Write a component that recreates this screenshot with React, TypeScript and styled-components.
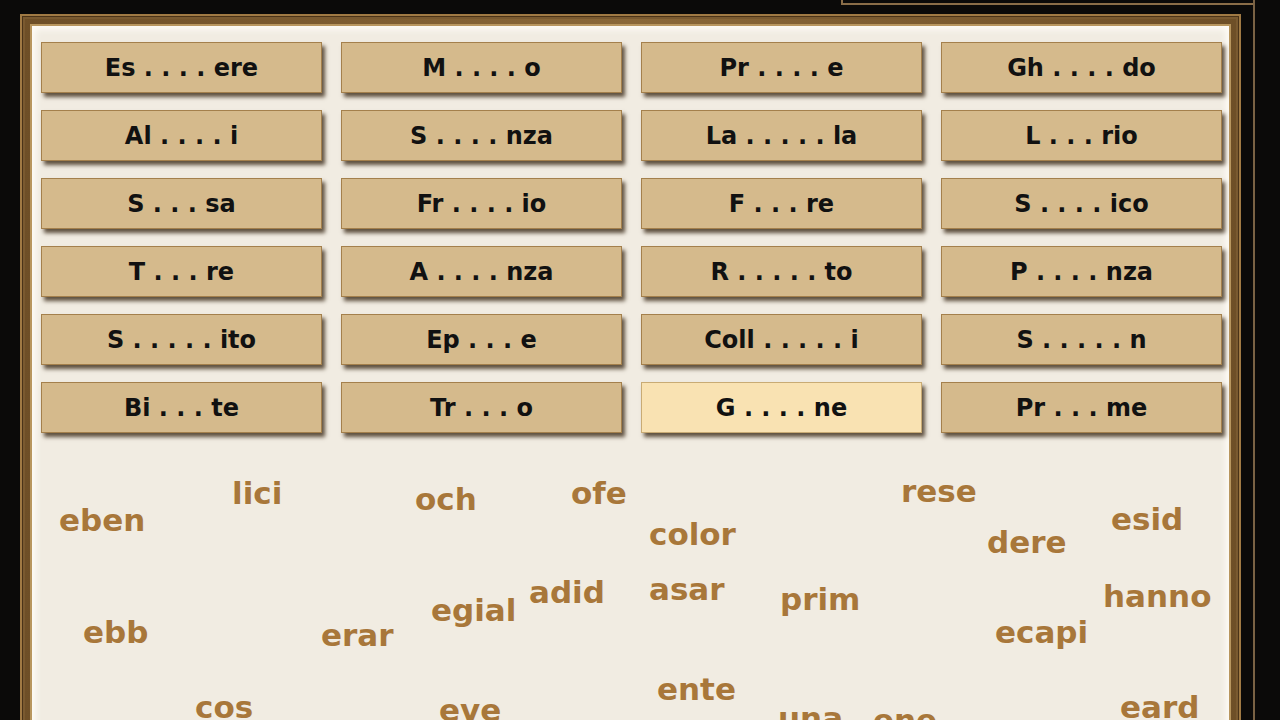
import React from "react";
import styled, { createGlobalStyle } from "styled-components";

const GlobalStyle = createGlobalStyle`
  html, body {
    margin: 0;
    padding: 0;
    background: #0b0a09;
    overflow: hidden;
  }
  #root {
    width: 1280px;
    height: 720px;
    overflow: hidden;
  }
`;

const Stage = styled.div`
  width: 1235px;
  height: 720px;
  margin-left: 20px;
  border-right: 2px solid #7a6244;
  box-sizing: border-box;
  display: flex;
  flex-direction: column;
`;

const TabRow = styled.div`
  height: 14px;
  display: flex;
  justify-content: flex-end;
  flex-shrink: 0;
`;

const Tab = styled.div`
  width: 410px;
  height: 3px;
  border-left: 2px solid #8a6d48;
  border-bottom: 2px solid #8a6d48;
`;

const Frame = styled.div`
  width: 1221px;
  flex: 1;
  box-sizing: border-box;
  border: 2px solid #a07a44;
  border-bottom: none;
  padding: 8px 8px 0 8px;
  background: linear-gradient(90deg, #6e4f27, #8a6838 50%, #6e4f27);
  box-shadow: inset 0 0 0 1px #4a3318, inset 0 0 0 3px #7a5a30;
  display: flex;
`;

const Panel = styled.div`
  flex: 1;
  border: 2px solid #b8965e;
  border-bottom: none;
  background: #f1ece2;
  box-shadow: inset 0 0 7px 3px #fffdf8;
  padding: 16px 7px 0 9px;
  display: flex;
  flex-direction: column;
`;

const Grid = styled.div`
  display: grid;
  grid-template-columns: repeat(4, 281px);
  grid-auto-rows: 51px;
  column-gap: 19px;
  row-gap: 17px;
`;

const Tile = styled.div<{ $active?: boolean }>`
  box-sizing: border-box;
  border: 1px solid ${(p) => (p.$active ? "#c9ab74" : "#a4804c")};
  background: ${(p) => (p.$active ? "#f9e2b2" : "#d5ba8c")};
  box-shadow: 3px 4px 4px rgba(45, 28, 8, 0.75);
  display: flex;
  align-items: center;
  justify-content: center;
  font-family: "DejaVu Sans", Verdana, sans-serif;
  font-weight: bold;
  font-size: 24px;
  color: #111;
  white-space: pre;
`;

const Pool = styled.div`
  position: relative;
  height: 400px;
`;

const Word = styled.span`
  position: absolute;
  font-family: "DejaVu Sans", Verdana, sans-serif;
  font-weight: bold;
  font-size: 31px;
  line-height: 1;
  color: #a8773a;
  white-space: nowrap;
`;

const tiles = [
  "Es . . . . ere", "M . . . . o", "Pr . . . . e", "Gh . . . . do",
  "Al . . . . i", "S . . . . nza", "La . . . . . la", "L . . . rio",
  "S . . . sa", "Fr . . . . io", "F . . . re", "S . . . . ico",
  "T . . . re", "A . . . . nza", "R . . . . . to", "P . . . . nza",
  "S . . . . . ito", "Ep . . . e", "Coll . . . . . i", "S . . . . . n",
  "Bi . . . te", "Tr . . . o", "G . . . . ne", "Pr . . . me",
];

// x = page left, b = page baseline
const words = [
  { t: "eben", x: 59, b: 531 },
  { t: "lici", x: 232, b: 504 },
  { t: "och", x: 415, b: 510 },
  { t: "ofe", x: 571, b: 504 },
  { t: "color", x: 649, b: 545 },
  { t: "rese", x: 901, b: 502 },
  { t: "dere", x: 987, b: 553 },
  { t: "esid", x: 1111, b: 530 },
  { t: "ebb", x: 83, b: 643 },
  { t: "erar", x: 321, b: 646 },
  { t: "egial", x: 431, b: 621 },
  { t: "adid", x: 529, b: 603 },
  { t: "asar", x: 649, b: 600 },
  { t: "prim", x: 780, b: 610 },
  { t: "hanno", x: 1103, b: 607 },
  { t: "ecapi", x: 995, b: 643 },
  { t: "cos", x: 195, b: 718 },
  { t: "eve", x: 439, b: 721 },
  { t: "ente", x: 657, b: 700 },
  { t: "una", x: 778, b: 729 },
  { t: "ene", x: 873, b: 731 },
  { t: "eard", x: 1120, b: 718 },
];

const POOL_X = 41;
const POOL_Y = 433;

export default function App() {
  return (
    <>
      <GlobalStyle />
      <Stage>
        <TabRow>
          <Tab />
        </TabRow>
        <Frame>
          <Panel>
            <Grid>
              {tiles.map((t, i) => (
                <Tile key={i} $active={t === "G . . . . ne"}>
                  {t}
                </Tile>
              ))}
            </Grid>
            <Pool>
              {words.map((w) => (
                <Word
                  key={w.t}
                  style={{ left: w.x - POOL_X, top: w.b - 26 - POOL_Y }}
                >
                  {w.t}
                </Word>
              ))}
            </Pool>
          </Panel>
        </Frame>
      </Stage>
    </>
  );
}
